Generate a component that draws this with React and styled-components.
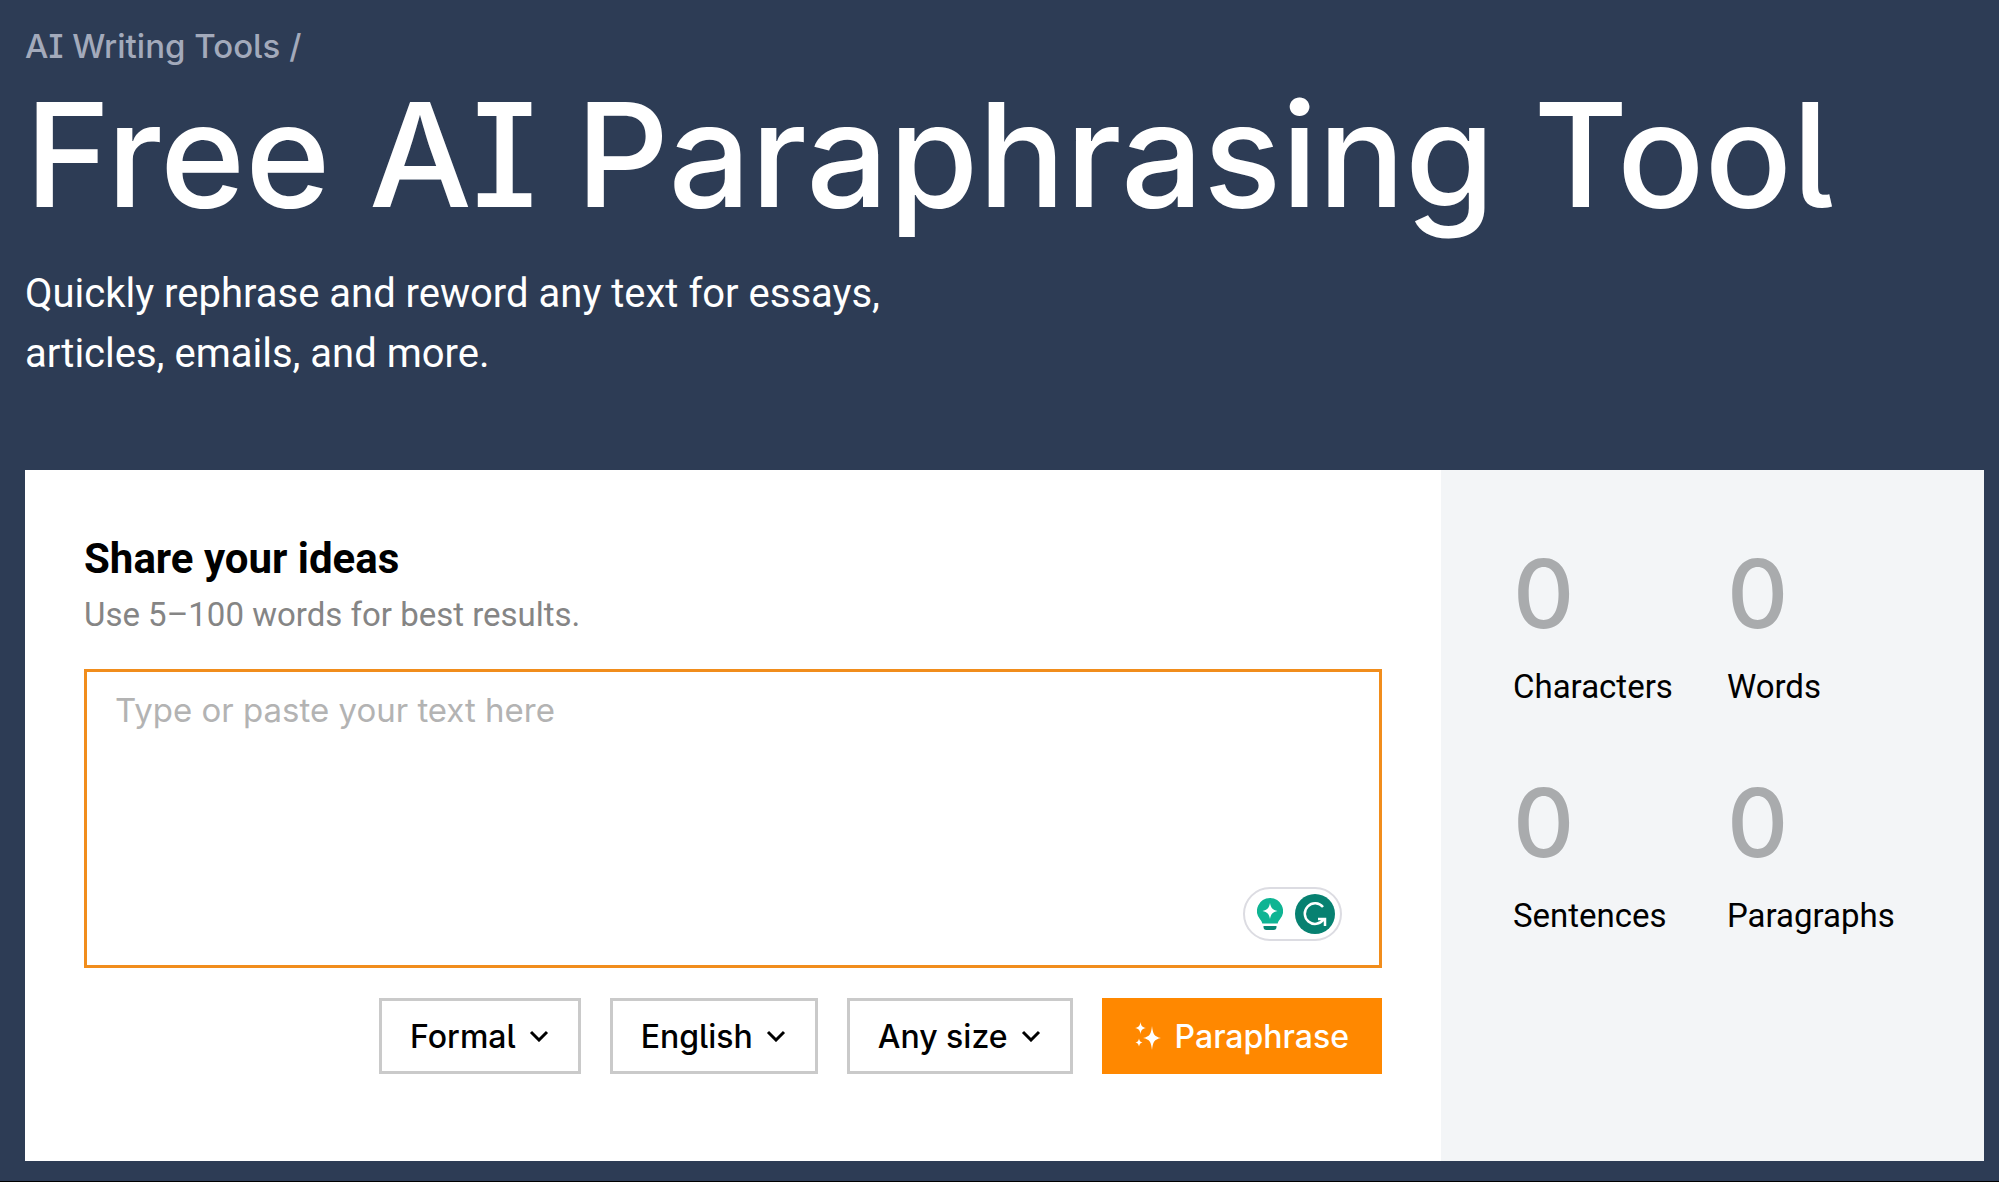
import React, { useState } from 'react';
import styled, { createGlobalStyle } from 'styled-components';

const tones = ['Formal', 'Casual', 'Friendly', 'Persuasive'];
const languages = ['English', 'French', 'German', 'Spanish'];
const sizes = ['Any size', 'Shorter', 'Longer'];

const countParts = (text, separator) => text.split(separator).filter((part) => part.trim()).length;

const Chevron = () => (
	<svg className='chevron' width='20' height='12' viewBox='0 0 20 12' fill='none' aria-hidden='true'>
		<path d='M2 2l8 8 8-8' stroke='currentColor' strokeWidth='3' />
	</svg>
);

const Sparkles = () => (
	<svg width='26' height='28' viewBox='0 0 26 28' fill='currentColor' aria-hidden='true'>
		<path d='M17 4c1 8 2 10.500 9 12-7 1.500-8 4-9 12-1-8-2-10.500-9-12 7-1.500 8-4 9-12z' />
		<path d='M5.500 0c.7 4 1.700 5.300 5.500 6-3.800.7-4.800 2-5.500 6-.7-4-1.700-5.300-5.500-6 3.800-.7 4.800-2 5.500-6z' />
		<path d='M4 16.500c.5 2.500 1.200 3.300 3.500 4-2.300.7-3 1.500-3.500 4-.5-2.500-1.200-3.300-3.500-4 2.300-.7 3-1.500 3.500-4z' />
	</svg>
);

const Bulb = () => (
	<svg width='26' height='32' viewBox='0 0 26 32' aria-hidden='true'>
		<path fill='#0fb493' d='M13 0a13 13 0 0 0-9.800 21.500c1.200 1.400 1.800 2.400 2.100 4h15.400c.3-1.600.9-2.600 2.100-4A13 13 0 0 0 13 0z' />
		<path fill='#fff' d='M13 5c1 5.200 2.600 6.900 7.500 8-4.900 1.100-6.500 2.800-7.500 8-1-5.200-2.600-6.900-7.500-8C10.400 11.900 12 10.200 13 5z' />
		<path fill='#078673' d='M6.500 28h13v1a3 3 0 0 1-3 3h-7a3 3 0 0 1-3-3z' />
	</svg>
);

const Checker = () => (
	<svg width='40' height='40' viewBox='0 0 40 40' fill='none' aria-hidden='true'>
		<circle cx='20' cy='20' r='20' fill='#078171' />
		<path d='M28 13a10.300 10.300 0 1 0 .5 12.500M23 25h7v7' stroke='#fff' strokeWidth='2.500' />
	</svg>
);

const Picker = ({ label, options }) => (
	<SelectBox>
		<Select aria-label={label}>
			{options.map((option) => (
				<option key={option}>{option}</option>
			))}
		</Select>
		<Chevron />
	</SelectBox>
);

const App = () => {
	const [text, setText] = useState('');

	const stats = [
		['Characters', text.length],
		['Words', countParts(text, /\s+/)],
		['Sentences', countParts(text, /[.!?]+/)],
		['Paragraphs', countParts(text, /\n+/)],
	];

	return (
		<Page>
			<GlobalStyle />
			<Breadcrumb aria-label='Breadcrumb'>
				<a href='#tools'>AI Writing Tools</a> /
			</Breadcrumb>
			<Title>Free AI Paraphrasing Tool</Title>
			<Intro>Quickly rephrase and reword any text for essays, articles, emails, and more.</Intro>
			<Card>
				<Editor onSubmit={(e) => e.preventDefault()}>
					<Label htmlFor='ideas'>Share your ideas</Label>
					<Hint id='hint'>Use 5–100 words for best results.</Hint>
					<InputBox>
						<TextArea
							id='ideas'
							aria-describedby='hint'
							placeholder='Type or paste your text here'
							value={text}
							onChange={(e) => setText(e.target.value)}
						/>
						<Assistant>
							<button type='button' aria-label='Suggestions'>
								<Bulb />
							</button>
							<button type='button' aria-label='Check grammar'>
								<Checker />
							</button>
						</Assistant>
					</InputBox>
					<Actions>
						<Picker label='Tone' options={tones} />
						<Picker label='Language' options={languages} />
						<Picker label='Length' options={sizes} />
						<Submit type='submit'>
							<Sparkles />
							Paraphrase
						</Submit>
					</Actions>
				</Editor>
				<Stats>
					{stats.map(([name, value]) => (
						<Stat key={name}>
							<dt>{name}</dt>
							<dd>{value}</dd>
						</Stat>
					))}
				</Stats>
			</Card>
		</Page>
	);
};

export default App;

// ########### styled components ###########
const GlobalStyle = createGlobalStyle`
	:root {
		--body: Roboto, sans-serif;
		--display: Inter, 'Noto Sans', sans-serif;
		/* tailed l and barred I */
		--displayFeatures: 'cv05', 'cv08';
	}

	* {
		box-sizing: border-box;
		margin: 0;
		padding: 0;
	}

	body {
		background-color: #2d3c55;
		font-family: var(--body);
		color: black;
	}
`;

const Page = styled.main`
	min-height: 100vh;
	padding: 24px 15px 20px 25px;
	border-bottom: 1px solid black;
`;

const Breadcrumb = styled.nav`
	font-family: var(--display);
	font-feature-settings: var(--displayFeatures);
	font-size: 33px;
	font-weight: 500;
	line-height: 44px;
	color: #a3aabb;

	a {
		color: inherit;
		text-decoration: none;
	}
`;

const Title = styled.h1`
	margin-top: 7px;
	font-family: var(--display);
	font-feature-settings: var(--displayFeatures);
	font-size: 145px;
	font-weight: 500;
	line-height: 160px;
	color: white;
`;

const Intro = styled.p`
	max-width: 900px;
	margin-top: 29px;
	font-size: 40px;
	line-height: 60px;
	color: white;
`;

const Card = styled.section`
	display: grid;
	grid-template-columns: 1416fr 543fr;
	margin-top: 86px;
	background-color: white;
`;

const Editor = styled.form`
	padding: 63px 59px 87px;
`;

const Label = styled.label`
	display: block;
	font-size: 42px;
	font-weight: 700;
	line-height: 52px;
`;

const Hint = styled.p`
	margin-top: 10px;
	font-size: 33px;
	line-height: 40px;
	color: #858585;
`;

const InputBox = styled.div`
	position: relative;
	margin-top: 34px;
`;

const TextArea = styled.textarea`
	display: block;
	width: 100%;
	height: 299px;
	padding: 16px 28px;
	border: 3px solid #f18d1c;
	outline: none;
	resize: none;
	font-family: var(--display);
	font-feature-settings: var(--displayFeatures);
	font-size: 33px;
	line-height: 45px;

	&::placeholder {
		color: #b3b3b3;
	}
`;

const Assistant = styled.div`
	position: absolute;
	right: 40px;
	bottom: 27px;
	display: flex;
	align-items: center;
	gap: 12px;
	padding: 5px 5px 5px 12px;
	border: 2px solid #dcdce2;
	border-radius: 27px;
	background-color: white;

	button {
		display: flex;
		border: none;
		background: none;
		cursor: pointer;
	}
`;

const Actions = styled.div`
	display: flex;
	justify-content: flex-end;
	gap: 29px;
	margin-top: 30px;
`;

const SelectBox = styled.div`
	position: relative;

	.chevron {
		position: absolute;
		right: 32px;
		top: 32px;
		pointer-events: none;
	}
`;

const Select = styled.select`
	appearance: none;
	field-sizing: content;
	height: 76px;
	padding: 0 62px 0 28px;
	border: 3px solid #cacaca;
	border-radius: 0;
	background-color: white;
	font-family: var(--display);
	font-feature-settings: var(--displayFeatures);
	font-size: 32px;
	font-weight: 500;
	color: black;
	cursor: pointer;
`;

const Submit = styled.button`
	display: flex;
	align-items: center;
	gap: 14px;
	height: 76px;
	padding: 0 33px;
	border: none;
	background-color: #ff8800;
	font-family: var(--display);
	font-feature-settings: var(--displayFeatures);
	font-size: 32px;
	font-weight: 500;
	color: white;
	cursor: pointer;
`;

const Stats = styled.dl`
	display: grid;
	grid-template-columns: max-content max-content;
	align-content: start;
	gap: 66px 54px;
	padding: 74px 72px;
	background-color: #f3f5f7;
`;

const Stat = styled.div`
	display: flex;
	flex-direction: column-reverse;
	gap: 23px;

	dt {
		font-size: 33px;
		line-height: 40px;
	}

	dd {
		font-family: var(--display);
		font-size: 95px;
		font-weight: 500;
		line-height: 100px;
		color: #a9abad;
	}
`;
// ########### styled components ###########
